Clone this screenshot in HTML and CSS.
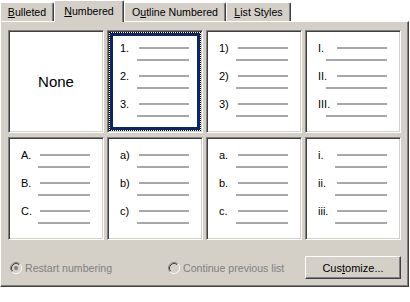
FILE: index.html
```html
<!DOCTYPE html>
<html lang="en">

<head>
    <meta charset="UTF-8">
    <title>Bullets and Numbering</title>
    <link rel="stylesheet" href="styles.css">
</head>

<body>
    <div class="dialog">
        <div class="tabs">
            <div class="tab t-bul"><u>B</u>ulleted</div>
            <div class="tab sel t-num"><u>N</u>umbered</div>
            <div class="tab t-out">O<u>u</u>tline Numbered</div>
            <div class="tab t-lst"><u>L</u>ist Styles</div>
        </div>

        <div class="panel">
            <div class="grid">
                <div class="cell none">None</div>

                <div class="cell sel">
                    <div class="item"><div class="row"><span class="num">1.</span><i class="ln"></i></div><i class="ln2"></i></div>
                    <div class="item"><div class="row"><span class="num">2.</span><i class="ln"></i></div><i class="ln2"></i></div>
                    <div class="item"><div class="row"><span class="num">3.</span><i class="ln"></i></div><i class="ln2"></i></div>
                </div>

                <div class="cell">
                    <div class="item"><div class="row"><span class="num">1)</span><i class="ln"></i></div><i class="ln2"></i></div>
                    <div class="item"><div class="row"><span class="num">2)</span><i class="ln"></i></div><i class="ln2"></i></div>
                    <div class="item"><div class="row"><span class="num">3)</span><i class="ln"></i></div><i class="ln2"></i></div>
                </div>

                <div class="cell roman">
                    <div class="item"><div class="row"><span class="num">I.</span><i class="ln"></i></div><i class="ln2"></i></div>
                    <div class="item"><div class="row"><span class="num">II.</span><i class="ln"></i></div><i class="ln2"></i></div>
                    <div class="item"><div class="row"><span class="num">III.</span><i class="ln"></i></div><i class="ln2"></i></div>
                </div>

                <div class="cell">
                    <div class="item"><div class="row"><span class="num">A.</span><i class="ln"></i></div><i class="ln2"></i></div>
                    <div class="item"><div class="row"><span class="num">B.</span><i class="ln"></i></div><i class="ln2"></i></div>
                    <div class="item"><div class="row"><span class="num">C.</span><i class="ln"></i></div><i class="ln2"></i></div>
                </div>

                <div class="cell">
                    <div class="item"><div class="row"><span class="num">a)</span><i class="ln"></i></div><i class="ln2"></i></div>
                    <div class="item"><div class="row"><span class="num">b)</span><i class="ln"></i></div><i class="ln2"></i></div>
                    <div class="item"><div class="row"><span class="num">c)</span><i class="ln"></i></div><i class="ln2"></i></div>
                </div>

                <div class="cell">
                    <div class="item"><div class="row"><span class="num">a.</span><i class="ln"></i></div><i class="ln2"></i></div>
                    <div class="item"><div class="row"><span class="num">b.</span><i class="ln"></i></div><i class="ln2"></i></div>
                    <div class="item"><div class="row"><span class="num">c.</span><i class="ln"></i></div><i class="ln2"></i></div>
                </div>

                <div class="cell">
                    <div class="item"><div class="row"><span class="num">i.</span><i class="ln"></i></div><i class="ln2"></i></div>
                    <div class="item"><div class="row"><span class="num">ii.</span><i class="ln"></i></div><i class="ln2"></i></div>
                    <div class="item"><div class="row"><span class="num">iii.</span><i class="ln"></i></div><i class="ln2"></i></div>
                </div>
            </div>

            <div class="opts">
                <div class="radio first">
                    <svg width="12" height="12" viewBox="0 0 12 12">
                        <circle cx="6" cy="6" r="5" fill="#d4d0c8" />
                        <path d="M2.11 9.89 A5.5 5.5 0 0 1 9.89 2.11" fill="none" stroke="#808080" />
                        <path d="M9.89 2.11 A5.5 5.5 0 0 1 2.11 9.89" fill="none" stroke="#fff" />
                        <path d="M2.82 9.18 A4.5 4.5 0 0 1 9.18 2.82" fill="none" stroke="#404040" />
                        <path d="M9.18 2.82 A4.5 4.5 0 0 1 2.82 9.18" fill="none" stroke="#d4d0c8" />
                        <circle cx="6" cy="6" r="2" fill="#808080" />
                    </svg>
                    <span>Restart numbering</span>
                </div>
                <div class="radio">
                    <svg width="12" height="12" viewBox="0 0 12 12">
                        <circle cx="6" cy="6" r="5" fill="#d4d0c8" />
                        <path d="M2.11 9.89 A5.5 5.5 0 0 1 9.89 2.11" fill="none" stroke="#808080" />
                        <path d="M9.89 2.11 A5.5 5.5 0 0 1 2.11 9.89" fill="none" stroke="#fff" />
                        <path d="M2.82 9.18 A4.5 4.5 0 0 1 9.18 2.82" fill="none" stroke="#404040" />
                        <path d="M9.18 2.82 A4.5 4.5 0 0 1 2.82 9.18" fill="none" stroke="#d4d0c8" />
                    </svg>
                    <span>Continue previous list</span>
                </div>
                <button class="btn">Cus<u>t</u>omize...</button>
            </div>
        </div>
    </div>
</body>

</html>
```

FILE: styles.css
```css
body {
    margin: 0;
    background-color: #fff;
    font-family: "Liberation Sans", Arial, sans-serif;
    font-size: 11px;
    color: #000;
}

.dialog {
    width: 409px;
}

/* tab strip */
.tabs {
    display: flex;
    align-items: flex-end;
    height: 21px;
    font-size: 10.6px;
}

.tab {
    box-sizing: border-box;
    height: 19px;
    line-height: 18px;
    text-align: center;
    background-color: #d4d0c8;
    border: 1px solid #fff;
    border-bottom: none;
    border-right-color: #404040;
    border-radius: 2px 2px 0 0;
    box-shadow: inset -1px 0 #808080;
}

.tab.sel {
    position: relative;
    z-index: 1;
    height: 22px;
    line-height: 20px;
    margin-bottom: -1px;
}

.t-bul { width: 54px; }
.t-num { width: 70px; }
.t-out { width: 102px; }
.t-lst { width: 65px; }

/* page */
.panel {
    box-sizing: border-box;
    height: 266px;
    padding: 8px 7px 0 7px;
    background-color: #d4d0c8;
    border: 1px solid #fff;
    border-right-color: #404040;
    border-bottom-color: #404040;
    box-shadow: inset -1px -1px #808080;
}

.grid {
    display: grid;
    grid-template-columns: repeat(4, 96px);
    grid-template-rows: repeat(2, 103px);
    column-gap: 3px;
    row-gap: 4px;
}

.cell {
    box-sizing: border-box;
    padding: 11px 0 0 12px;
    background-color: #fff;
    border: 1px solid #808080;
    border-right-color: #fff;
    border-bottom-color: #fff;
    box-shadow: inset 1px 1px #404040, inset -1px -1px #d4d0c8;
}

.cell.none {
    display: flex;
    align-items: center;
    justify-content: center;
    padding: 0;
    font-size: 15px;
}

.cell.sel {
    position: relative;
}

.cell.sel::after {
    content: "";
    position: absolute;
    inset: 1px;
    border: 1px dotted #000;
    box-shadow: inset 0 0 0 3px #0a246a;
}

.item {
    height: 28px;
}

.row {
    display: flex;
    align-items: center;
    height: 12px;
}

.num {
    width: 19px;
    line-height: 12px;
}

.ln,
.ln2 {
    display: block;
    height: 2px;
    background-color: #a8a8a8;
}

.ln {
    width: 50px;
}

.ln2 {
    width: 52px;
    margin: 5px 0 0 17px;
}

.roman .ln2 {
    width: 61px;
    margin-left: 8px;
}

/* bottom row */
.opts {
    display: flex;
    align-items: center;
    margin-top: 16px;
    padding-left: 2px;
    font-size: 10.6px;
}

.radio {
    display: flex;
    align-items: center;
    gap: 3px;
    color: #808080;
}

.radio.first {
    width: 158px;
}

.btn {
    width: 96px;
    height: 23px;
    margin-left: auto;
    padding: 0;
    font-family: inherit;
    font-size: 11px;
    color: #000;
    background-color: #d4d0c8;
    border: 1px solid #fff;
    border-right-color: #404040;
    border-bottom-color: #404040;
    border-radius: 0;
    box-shadow: inset -1px -1px #808080;
}
```
